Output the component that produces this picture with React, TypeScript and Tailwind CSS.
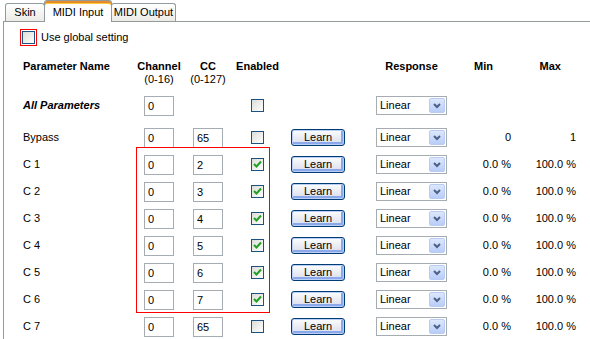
import React from "react";

type Row = { name: string; cc: string; on: boolean; min: string; max: string };

const rows: Row[] = [
  { name: "Bypass", cc: "65", on: false, min: "0", max: "1" },
  { name: "C 1", cc: "2", on: true, min: "0.0 %", max: "100.0 %" },
  { name: "C 2", cc: "3", on: true, min: "0.0 %", max: "100.0 %" },
  { name: "C 3", cc: "4", on: true, min: "0.0 %", max: "100.0 %" },
  { name: "C 4", cc: "5", on: true, min: "0.0 %", max: "100.0 %" },
  { name: "C 5", cc: "6", on: true, min: "0.0 %", max: "100.0 %" },
  { name: "C 6", cc: "7", on: true, min: "0.0 %", max: "100.0 %" },
  { name: "C 7", cc: "65", on: false, min: "0.0 %", max: "100.0 %" },
];

const Check = ({ on }: { on: boolean }) => (
  <span className="flex h-[13px] w-[13px] shrink-0 items-center justify-center border border-[#1c5180] bg-linear-to-br from-[#dcdcd7] to-white">
    {on && (
      <svg width="9" height="9" viewBox="0 0 9 9">
        <path d="M1 4 L3.5 6.5 L8 1.5" stroke="#21a121" strokeWidth="2" fill="none" />
      </svg>
    )}
  </span>
);

const Field = ({ value }: { value: string }) => (
  <input
    readOnly
    value={value}
    className="h-[20px] w-[30px] shrink-0 border border-[#a5acb2] bg-white pl-[3px] text-[11px] text-black outline-none"
  />
);

const Learn = () => (
  <button className="flex h-[17px] w-[54px] shrink-0 items-center justify-center rounded-[3px] border border-[#003c74] bg-linear-to-b from-[#fdfdfd] to-[#d8dcea] text-[11px] text-black shadow-[inset_0_0_0_1px_#b9cff7,inset_-1px_-1px_0_2px_#8aa8ea]">
    Learn
  </button>
);

const Select = () => (
  <div className="flex h-[19px] w-[71px] shrink-0 items-center justify-between border border-[#a5acb2] bg-white pl-[3px] pr-[1px]">
    <span className="text-[11px]">Linear</span>
    <span className="flex h-[15px] w-[16px] items-center justify-center rounded-[2px] border border-[#b8cbf5] bg-linear-to-b from-[#dde7fd] to-[#b9cdf8]">
      <svg width="8" height="6" viewBox="0 0 8 6">
        <path d="M1 1 L4 4 L7 1" stroke="#4d6185" strokeWidth="2" fill="none" />
      </svg>
    </span>
  </div>
);

const Tab = ({ label, width, active }: { label: string; width: string; active?: boolean }) =>
  active ? (
    <div
      className={`relative z-10 -mx-[1px] -mb-[1px] flex h-[22px] items-center justify-center rounded-t-[3px] border border-b-0 border-[#919b9c] bg-white shadow-[inset_0_2px_0_#e68b2c,inset_0_3px_0_#ffc73c] ${width}`}
    >
      <span className="pt-[2px]">{label}</span>
    </div>
  ) : (
    <div
      className={`flex h-[18px] items-center justify-center rounded-t-[3px] border border-b-0 border-[#919b9c] bg-linear-to-b from-white to-[#ecebe6] ${width}`}
    >
      {label}
    </div>
  );

export default function App() {
  return (
    <div
      className="relative h-[339px] w-[590px] overflow-hidden bg-white text-[11px] leading-[13px] text-black"
      style={{ fontFamily: '"Liberation Sans", Arial, sans-serif' }}
    >
      {/* tab strip */}
      <div className="flex h-[21px] items-end pl-[5px]">
        <Tab label="Skin" width="w-[40px]" />
        <Tab label="MIDI Input" width="w-[68px]" active />
        <Tab label="MIDI Output" width="w-[65px]" />
      </div>

      <div className="ml-[3px] h-[318px] border-l border-t border-[#919b9c]">
        {/* global setting */}
        <div className="ml-[16px] mt-[7px] flex items-center gap-[4px]">
          <span className="flex h-[17px] w-[17px] items-center justify-center border border-[#ff0000]">
            <Check on={false} />
          </span>
          <span>Use global setting</span>
        </div>

        {/* header */}
        <div className="mt-[14px] flex pl-[19px] font-bold">
          <div className="w-[121px] shrink-0">Parameter Name</div>
          <div className="flex w-[30px] shrink-0 flex-col items-center whitespace-nowrap">
            <span>Channel</span>
            <span className="font-normal">(0-16)</span>
          </div>
          <div className="ml-[19px] flex w-[30px] shrink-0 flex-col items-center whitespace-nowrap">
            <span>CC</span>
            <span className="font-normal">(0-127)</span>
          </div>
          <div className="ml-[28px] flex w-[13px] shrink-0 justify-center whitespace-nowrap">Enabled</div>
          <div className="ml-[112px] flex w-[71px] shrink-0 justify-center whitespace-nowrap">Response</div>
          <div className="w-[64px] shrink-0 pr-[18px] text-right">Min</div>
          <div className="w-[65px] shrink-0 pr-[15px] text-right">Max</div>
        </div>

        {/* all parameters */}
        <div className="mt-[4px] flex h-[31px] items-center pl-[19px]">
          <div className="w-[121px] shrink-0 font-bold italic">All Parameters</div>
          <Field value="0" />
          <div className="ml-[19px] w-[30px] shrink-0" />
          <div className="ml-[28px]">
            <Check on={false} />
          </div>
          <div className="ml-[27px] w-[54px] shrink-0" />
          <div className="ml-[31px]">
            <Select />
          </div>
        </div>

        {/* parameter rows */}
        <div className="mt-[3px] flex flex-col">
          {rows.map((r) => (
            <div key={r.name} className="flex h-[27px] items-center pl-[19px]">
              <div className="w-[121px] shrink-0">{r.name}</div>
              <Field value="0" />
              <div className="ml-[19px]">
                <Field value={r.cc} />
              </div>
              <div className="ml-[28px]">
                <Check on={r.on} />
              </div>
              <div className="ml-[27px]">
                <Learn />
              </div>
              <div className="ml-[31px]">
                <Select />
              </div>
              <div className="w-[64px] shrink-0 text-right">{r.min}</div>
              <div className="w-[65px] shrink-0 text-right">{r.max}</div>
            </div>
          ))}
        </div>
      </div>

      {/* highlight annotation */}
      <div className="pointer-events-none absolute left-[136px] top-[147px] h-[166px] w-[134px] border border-[#ff0000]" />
    </div>
  );
}
